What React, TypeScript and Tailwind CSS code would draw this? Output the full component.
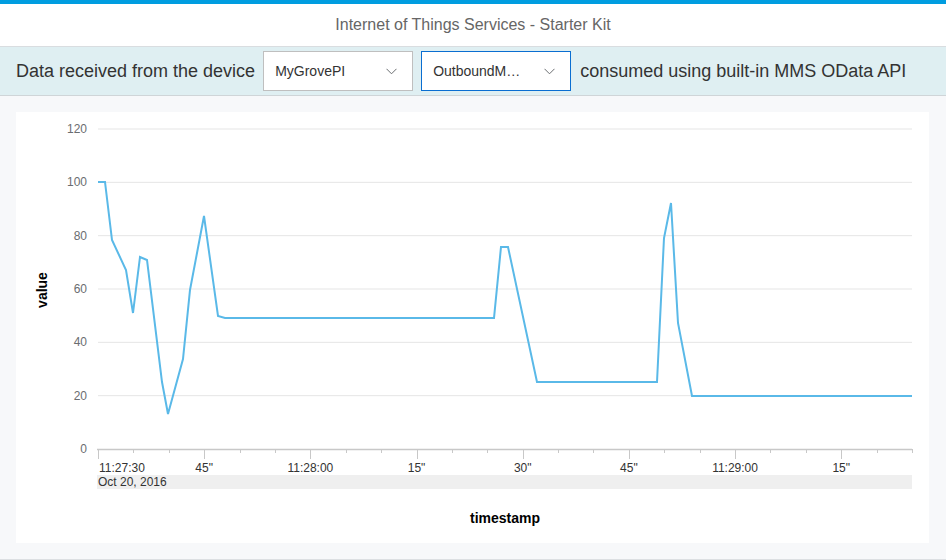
import React from 'react';

const points: [number, number][] = [
  [98, 182], [105, 182], [112, 240], [126, 270], [133, 313], [140, 257], [147, 260],
  [162, 382], [168, 414], [183, 359], [190, 290], [204, 216], [218, 316], [225, 318],
  [494, 318], [501, 247], [508, 247], [537, 382], [657, 382], [664, 238], [671, 203],
  [678, 323], [692, 396], [912, 396]
];

const yTicks = [120, 100, 80, 60, 40, 20, 0];
const xLabels: Record<number, string> = {
  0: '11:27:30',
  3: '45"',
  6: '11:28:00',
  9: '15"',
  12: '30"',
  15: '45"',
  18: '11:29:00',
  21: '15"'
};

const X0 = 98;
const X1 = 912;
const yFor = (v: number) => 449 - (v * 320) / 120;
const xFor = (k: number) => X0 + (k * (X1 - X0)) / 23;

function Chevron() {
  return (
    <svg width="11" height="7" viewBox="0 0 11 7" fill="none">
      <path d="M0.5 0.8 L5.5 5.8 L10.5 0.8" stroke="#6a6d70" strokeWidth="1" />
    </svg>
  );
}

function Select({ value, active }: { value: string; active?: boolean }) {
  return (
    <div
      className={`w-[150px] h-[40px] bg-white border flex items-center justify-between pl-[11px] pr-[15px] ${
        active ? 'border-[#0a6ed1]' : 'border-[#bfbfbf]'
      }`}
    >
      <span className="text-[14px] text-[#333]">{value}</span>
      <Chevron />
    </div>
  );
}

function Chart() {
  const ticks = Array.from({ length: 24 }, (_, k) => k);
  return (
    <svg width="913" height="431" viewBox="16 112 913 431" className="block">
      {/* grid */}
      {yTicks.map((v) => (
        <g key={v}>
          {v > 0 && <line x1={X0} x2={X1} y1={yFor(v)} y2={yFor(v)} stroke="#e5e5e5" strokeWidth="1" />}
          <text x={87} y={yFor(v) + 4} textAnchor="end" fontSize="12" fill="#6a6d70" fontFamily="Liberation Sans, Arial, sans-serif">
            {v}
          </text>
        </g>
      ))}

      {/* x axis */}
      <line x1={X0 - 1} x2={X1} y1={449.5} y2={449.5} stroke="#c8c8c8" strokeWidth="1.5" />
      {ticks.map((k) => {
        const x = Math.round(xFor(k)) + 0.5;
        const major = k % 3 === 0;
        return <line key={k} x1={x} x2={x} y1={449} y2={major ? 459 : 453} stroke="#c8c8c8" strokeWidth="1" />;
      })}
      {Object.entries(xLabels).map(([k, label]) => {
        const idx = Number(k);
        return (
          <text
            key={k}
            x={idx === 0 ? X0 + 1 : xFor(idx)}
            y={472}
            textAnchor={idx === 0 ? 'start' : 'middle'}
            fontSize="12"
            fill="#333"
            fontFamily="Liberation Sans, Arial, sans-serif"
          >
            {label}
          </text>
        );
      })}

      {/* date band */}
      <rect x={97} y={475} width={X1 - 97} height={14} fill="#efefef" />
      <text x={98} y={486} fontSize="12" fill="#333" fontFamily="Liberation Sans, Arial, sans-serif">
        Oct 20, 2016
      </text>

      {/* axis titles */}
      <text x={505} y={523} textAnchor="middle" fontSize="14" fontWeight="bold" fill="#000" fontFamily="Liberation Sans, Arial, sans-serif">
        timestamp
      </text>
      <text
        x={0}
        y={0}
        transform="translate(47 290) rotate(-90)"
        textAnchor="middle"
        fontSize="14"
        fontWeight="bold"
        fill="#000"
        fontFamily="Liberation Sans, Arial, sans-serif"
      >
        value
      </text>

      {/* series */}
      <polyline
        points={points.map((p) => p.join(',')).join(' ')}
        fill="none"
        stroke="#5ab9e8"
        strokeWidth="2"
        strokeLinejoin="miter"
      />
    </svg>
  );
}

export default function App() {
  return (
    <div className="w-[946px] h-[560px] flex flex-col bg-[#f7f8fa] font-['Liberation_Sans',Arial,sans-serif] overflow-hidden">
      {/* Top bar */}
      <div className="h-[4px] bg-[#009de0]" />
      <div className="h-[43px] bg-white border-b border-[#d9dde0] flex items-center justify-center">
        <span className="text-[16px] text-[#666]">Internet of Things Services - Starter Kit</span>
      </div>

      {/* Toolbar */}
      <div className="h-[49px] bg-[#dfeff2] border-b border-[#cfd5d8] flex items-center pl-4">
        <span className="text-[18px] text-[#333] mr-[8px]">Data received from the device</span>
        <Select value="MyGrovePI" />
        <div className="w-[8px]" />
        <Select value="OutboundM…" active />
        <span className="text-[18px] text-[#333] ml-[9px]">consumed using built-in MMS OData API</span>
      </div>

      {/* Content */}
      <div className="flex-1 border-b border-[#dcdfe2] pt-4 pl-4">
        <div className="w-[913px] h-[431px] bg-white">
          <Chart />
        </div>
      </div>
    </div>
  );
}
